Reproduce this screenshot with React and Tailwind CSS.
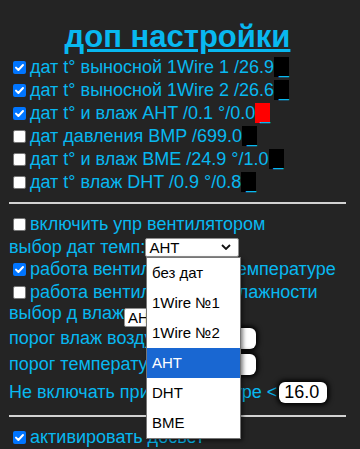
const sensors = [
  { on: true, label: "дат t° выносной 1Wire 1 /26.9" },
  { on: true, label: "дат t° выносной 1Wire 2 /26.6" },
  { on: true, label: "дат t° и влаж AHT /0.1 °/0.0", red: true },
  { on: false, label: "дат давления BMP /699.0" },
  { on: false, label: "дат t° и влаж BME /24.9 °/1.0" },
  { on: false, label: "дат t° влаж DHT /0.9 °/0.8" },
];

const options = ["без дат", "1Wire №1", "1Wire №2", "AHT", "DHT", "BME"];

function Check({ on }) {
  if (!on) return <span className="w-[13px] h-[13px] ml-[4px] mr-[4px] shrink-0 rounded-[2px] bg-white border border-[#767676]" />;
  return (
    <span className="w-[13px] h-[13px] ml-[4px] mr-[4px] shrink-0 rounded-[2px] bg-[#0075ff] flex items-center justify-center">
      <svg width="11" height="11" viewBox="0 0 11 11"><path d="M2 5.6L4.4 8L9 3" stroke="#fff" strokeWidth="2" fill="none" strokeLinecap="round" strokeLinejoin="round" /></svg>
    </span>
  );
}

function CheckRow({ on, children, className = "" }) {
  return (
    <div className={`flex items-center h-[23px] whitespace-nowrap ${className}`}>
      <Check on={on} />
      <span className="leading-[23px]">{children}</span>
    </div>
  );
}

function Select({ w, children }) {
  return (
    <div className={`${w} h-[19px] bg-white border border-[#8f8f8f] rounded-[2px] flex items-center justify-between pl-[3px] pr-[7px] text-[15px] leading-none text-black shrink-0`}>
      <span>{children}</span>
      <svg width="10" height="6" viewBox="0 0 10 6"><path d="M1 1L5 5L9 1" stroke="#111" strokeWidth="1.8" fill="none" /></svg>
    </div>
  );
}

function Num({ value = "" }) {
  return <div className="w-[48px] h-[21px] bg-white rounded-[6px] shadow-[0_0_5px_2px_#000] flex items-center pl-[5px] text-[18px] text-black shrink-0">{value}</div>;
}

export default function App() {
  return (
    <div className="relative min-h-screen bg-[#242424] text-[#08b8f0] text-[18px] pt-[18px] pl-[9px] pr-[14px] overflow-hidden" style={{ fontFamily: '"Liberation Sans", Arial, sans-serif' }}>
      <h1 className="h-[38px] leading-[38px] text-[31px] font-bold text-center underline whitespace-nowrap">доп настройки</h1>

      {sensors.map((s) => (
        <CheckRow key={s.label} on={s.on}>
          {s.label}
          <span className={s.red ? "bg-[#ff0000]" : "bg-black"}>{"\u00a0_"}</span>
        </CheckRow>
      ))}

      <div className="mt-[8px] w-[337px] h-[2px] bg-[#d2d2d2]" />

      <CheckRow on={false} className="mt-[9px]">включить упр вентилятором</CheckRow>
      <div className="flex items-center h-[22px] whitespace-nowrap">
        <span className="leading-[23px]">выбор дат темп:</span>
        <Select w="w-[94px]">AHT</Select>
      </div>
      <CheckRow on>работа вентилятора по температуре</CheckRow>
      <CheckRow on={false}>работа вентилятора по влажности</CheckRow>
      <div className="flex items-start h-[22px] whitespace-nowrap">
        <span className="leading-[19px]">выбор д влаж</span>
        <div className="mt-[4px]"><Select w="w-[94px]">AHT</Select></div>
      </div>
      <div className="flex items-center h-[24px] whitespace-nowrap">
        <span className="w-[199px] leading-[23px]">порог влаж воздуха</span>
        <Num />
      </div>
      <div className="flex items-center h-[24px] mt-[2px] whitespace-nowrap">
        <span className="w-[199px] leading-[23px]">порог температуры</span>
        <Num />
      </div>
      <div className="flex items-center h-[24px] mt-[4px] whitespace-nowrap">
        <span className="leading-[23px]">Не включать при температуре &lt;</span>
        <div className="ml-[2px]"><Num value="16.0" /></div>
      </div>

      <div className="mt-[11px] w-[337px] h-[2px] bg-[#d2d2d2]" />
      <CheckRow on className="mt-[9px]">активировать досвет</CheckRow>

      {/* open list of the first select */}
      <div className="absolute left-[146px] top-[257px] w-[95px] bg-white border border-[#767676] shadow-[2px_2px_4px_rgba(0,0,0,0.5)] text-[15px] text-black">
        {options.map((o) => (
          <div key={o} className={`h-[30px] flex items-center pl-[5px] ${o === "AHT" ? "bg-[#1967d2] text-white" : ""}`}>{o}</div>
        ))}
      </div>
    </div>
  );
}
